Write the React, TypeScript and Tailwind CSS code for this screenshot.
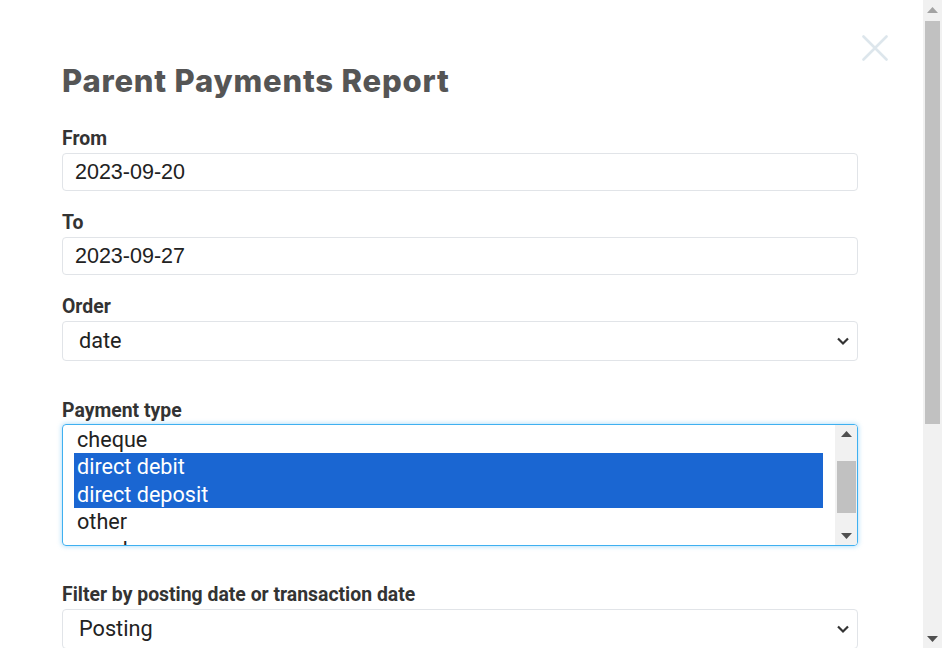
import React from 'react';

/**
 * 학부모 결제 보고서 폼 (스크린샷 재현)
 */

const roboto = { fontFamily: 'Roboto, "Liberation Sans", sans-serif' };

function Chevron() {
  return (
    <svg width="14" height="10" viewBox="0 0 14 10" className="shrink-0">
      <path d="M2 2.5 L7 7.5 L12 2.5" fill="none" stroke="#333" strokeWidth="2.2" />
    </svg>
  );
}

function Label({ children, className = 'mb-[1px]' }: { children: React.ReactNode; className?: string }) {
  return <div className={'text-[19.4px] leading-[26px] font-bold text-[#333] ' + className}>{children}</div>;
}

function Field({ label, children, className = '' }: { label: string; children: React.ReactNode; className?: string }) {
  return (
    <div className={className}>
      <Label>{label}</Label>
      {children}
    </div>
  );
}

function TextInput({ value }: { value: string }) {
  return (
    <div className="h-[38px] border border-[#e1e4e8] rounded-[4px] flex items-center px-[12px] pt-[1px] text-[21.5px] text-[#222] font-['Liberation_Sans',Arial,sans-serif]">
      {value}
    </div>
  );
}

function SelectBox({ value }: { value: string }) {
  return (
    <div className="h-[40px] border border-[#e1e4e8] rounded-[4px] flex items-center justify-between pl-[16px] pr-[7px] text-[21.7px] text-[#222]">
      <span className="pt-[1px]">{value}</span>
      <Chevron />
    </div>
  );
}

function Arrow({ dir, color = '#505050' }: { dir: 'up' | 'down'; color?: string }) {
  return (
    <svg width="11" height="6" viewBox="0 0 11 6">
      {dir === 'up' ? <path d="M0 6 L5.5 0 L11 6 Z" fill={color} /> : <path d="M0 0 L5.5 6 L11 0 Z" fill={color} />}
    </svg>
  );
}

export default function App() {
  const options = [
    { name: 'cheque', selected: false },
    { name: 'direct debit', selected: true },
    { name: 'direct deposit', selected: true },
    { name: 'other', selected: false },
    { name: 'voucher new', selected: false },
  ];

  return (
    <div className="h-[648px] w-[942px] flex bg-white overflow-hidden" style={roboto}>
      {/* 본문 */}
      <div className="flex-1 relative pl-[62px] pr-[65px] pt-[58px]">
        {/* 닫기 버튼 */}
        <svg className="absolute left-[862px] top-[35px]" width="26" height="26" viewBox="0 0 26 26">
          <path d="M1.5 1.5 L24.5 24.5 M24.5 1.5 L1.5 24.5" stroke="#dde6ec" strokeWidth="2.6" strokeLinecap="round" />
        </svg>

        <h1 className="text-[31px] leading-[46px] font-extrabold text-[#555] tracking-[0.8px] mb-[22px] font-['Inter','Open_Sans',sans-serif]">
          Parent Payments Report
        </h1>

        <Field label="From" className="mb-[19px]">
          <TextInput value="2023-09-20" />
        </Field>

        <Field label="To" className="mb-[19px]">
          <TextInput value="2023-09-27" />
        </Field>

        <Field label="Order" className="mb-[37px]">
          <SelectBox value="date" />
        </Field>

        <div className="mb-[36px]">
          <Label className="mb-0">Payment type</Label>
          {/* 다중 선택 목록 */}
          <div className="h-[122px] border border-[#3fb0f0] rounded-[4px] shadow-[0_0_4px_1px_rgba(64,176,240,0.35)] flex overflow-hidden">
            <div className="flex-1 pl-[11px] pr-[12px] mt-[0.5px] overflow-hidden">
              {options.map((o) => (
                <div
                  key={o.name}
                  className={
                    'h-[27.5px] leading-[27.5px] px-[3px] text-[21.6px] whitespace-nowrap ' +
                    (o.selected ? 'bg-[#1a66d2] text-white' : 'text-[#222]')
                  }
                >
                  {o.name}
                </div>
              ))}
            </div>
            <div className="w-[22px] bg-[#f1f1f1] flex flex-col items-center pt-[6px] pb-[6px]">
              <Arrow dir="up" />
              <div className="mt-[24px] w-[19px] h-[52px] bg-[#c1c1c1]" />
              <div className="flex-1" />
              <Arrow dir="down" />
            </div>
          </div>
        </div>

        <Field label="Filter by posting date or transaction date">
          <SelectBox value="Posting" />
        </Field>
      </div>

      {/* 페이지 스크롤바 */}
      <div className="w-[19px] bg-[#f1f1f1] flex flex-col items-center pt-[7px]">
        <Arrow dir="up" color="#a3a3a3" />
        <div className="mt-[8px] w-[15px] h-[403px] bg-[#c1c1c1]" />
        <div className="flex-1" />
        <div className="mb-[6px]">
          <Arrow dir="down" />
        </div>
      </div>
    </div>
  );
}
